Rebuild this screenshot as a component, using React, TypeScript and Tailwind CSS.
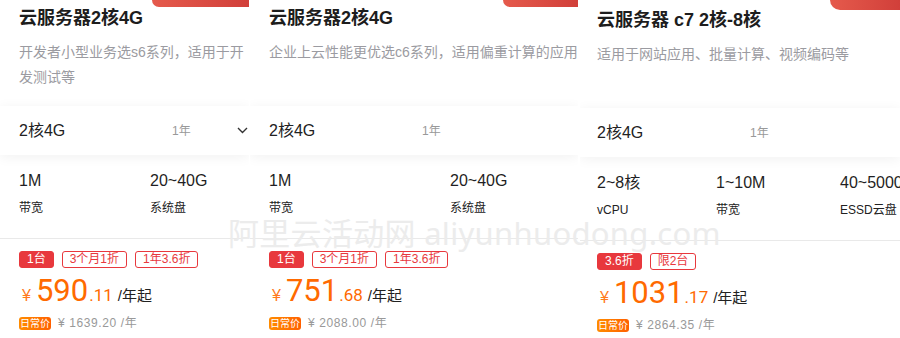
import React from "react";

type Spec = { value: string; label: string };

interface Card {
  title: string;
  desc: string;
  specs: Spec[];
  cols: string;
  tags: { text: string; filled?: boolean }[];
  price: string;
  cents: string;
  daily: string;
  chevron?: boolean;
  nowrap?: boolean;
}

const cards: Card[] = [
  {
    title: "云服务器2核4G",
    desc: "开发者小型业务选s6系列，适用于开发测试等",
    specs: [
      { value: "1M", label: "带宽" },
      { value: "20~40G", label: "系统盘" },
    ],
    cols: "grid-cols-[131px_1fr]",
    tags: [{ text: "1台", filled: true }, { text: "3个月1折" }, { text: "1年3.6折" }],
    price: "590",
    cents: ".11",
    daily: "1639.20",
    chevron: true,
  },
  {
    title: "云服务器2核4G",
    desc: "企业上云性能更优选c6系列，适用偏重计算的应用",
    specs: [
      { value: "1M", label: "带宽" },
      { value: "20~40G", label: "系统盘" },
    ],
    cols: "grid-cols-[181px_1fr]",
    tags: [{ text: "1台", filled: true }, { text: "3个月1折" }, { text: "1年3.6折" }],
    price: "751",
    cents: ".68",
    daily: "2088.00",
    nowrap: true,
  },
  {
    title: "云服务器 c7 2核-8核",
    desc: "适用于网站应用、批量计算、视频编码等",
    specs: [
      { value: "2~8核", label: "vCPU" },
      { value: "1~10M", label: "带宽" },
      { value: "40~5000G", label: "ESSD云盘" },
    ],
    cols: "grid-cols-[119px_124px_1fr]",
    tags: [{ text: "3.6折", filled: true }, { text: "限2台" }],
    price: "1031",
    cents: ".17",
    daily: "2864.35",
  },
];

const font = { fontFamily: '"Liberation Sans", "Noto Sans CJK SC", sans-serif' };

function ProductCard({ card, className, pad, badge }: { card: Card; className: string; pad: string; badge: string }) {
  return (
    <div className={`relative overflow-hidden bg-white ${className}`}>
      <div className={`absolute top-0 right-0 rounded-bl-[14px] bg-gradient-to-r from-[#e55a4c] to-[#d13f3a] ${badge}`} />

      <div className={`h-[106px] pt-[6px] ${pad}`}>
        <h3 className="text-[18px] leading-[24px] font-bold text-[#1d1d1d] whitespace-nowrap">{card.title}</h3>
        <p
          className={`mt-[10px] text-[14px] leading-[25px] text-[#9b9ba1] ${
            card.nowrap ? "whitespace-nowrap" : ""
          }`}
        >
          {card.desc}
        </p>
      </div>

      <div className={`h-[49px] flex items-center bg-white shadow-[0_2px_12px_rgba(0,0,0,0.06)] ${pad}`}>
        <span className="w-[153px] text-[16px] text-[#222]">2核4G</span>
        <span className="text-[12px] text-[#999]">1年</span>
        {card.chevron && (
          <svg className="ml-auto mr-[1px]" width="11" height="7" viewBox="0 0 11 7" fill="none">
            <path d="M1 1l4.5 4.5L10 1" stroke="#333" strokeWidth="1.4" />
          </svg>
        )}
      </div>

      <div className={`h-[83px] pt-[15px] grid ${card.cols} ${pad}`}>
        {card.specs.map((s) => (
          <div key={s.label} className="whitespace-nowrap">
            <div className="text-[16px] leading-[22px] text-[#1f1f24]">{s.value}</div>
            <div className="mt-[7px] text-[12px] leading-[18px] text-[#222]">{s.label}</div>
          </div>
        ))}
      </div>

      <div className="border-t border-[#e9e9e9]" />

      <div className={pad}>
        <div className="mt-[12px] flex gap-[8px]">
          {card.tags.map((t) => (
            <span
              key={t.text}
              className={`h-[17px] px-[7px] rounded-[3px] border text-[12px] leading-[15px] border-[#e8383d] ${
                t.filled ? "bg-[#e8383d] text-white" : "text-[#e8383d]"
              }`}
            >
              {t.text}
            </span>
          ))}
        </div>

        <div className="mt-[5px] flex items-baseline leading-[36px] whitespace-nowrap" style={{ fontFamily: 'Roboto, "Liberation Sans", sans-serif' }}>
          <span className="ml-[3px] mr-[5px] text-[16px] text-[#ff7a1a]" style={font}>¥</span>
          <span className="text-[31px] text-[#ff6a00]">{card.price}</span>
          <span className="ml-[1px] text-[17px] text-[#ff6a00]">{card.cents}</span>
          <span className="ml-[5px] text-[15px] text-[#222]" style={font}>/年起</span>
        </div>

        <div className="mt-[1px] flex items-center h-[16px] whitespace-nowrap">
          <span className="h-[13px] px-[1px] rounded-[3px] bg-gradient-to-r from-[#ff8c00] to-[#ff5f00] text-[10px] leading-[13px] text-white">
            日常价
          </span>
          <span className="ml-[7px] text-[12px] tracking-[0.6px] text-[#999]">¥ {card.daily} /年</span>
        </div>
      </div>
    </div>
  );
}

export default function App() {
  return (
    <div className="relative w-[900px] h-[338px] overflow-hidden bg-white flex" style={font}>
      <ProductCard card={cards[0]} className="w-[249px] shrink-0" pad="pl-[19px]" badge="w-[97px] h-[7px]" />
      <div className="w-[1px] shrink-0" />
      <ProductCard card={cards[1]} className="w-[328px] shrink-0" pad="pl-[19px]" badge="w-[75px] h-[7px]" />
      <div className="w-[2px] shrink-0" />
      <ProductCard card={cards[2]} className="flex-1 pt-[2px]" pad="pl-[17px]" badge="w-[70px] h-[10px]" />

      <div
        className="pointer-events-none absolute left-[228px] top-[213px] text-[31px] leading-[40px] tracking-[0.3px] text-[#ececec] whitespace-nowrap"
        style={{ fontFamily: '"Noto Sans", "Noto Sans CJK SC", sans-serif' }}
      >
        阿里云活动网 aliyunhuodong.com
      </div>
    </div>
  );
}
